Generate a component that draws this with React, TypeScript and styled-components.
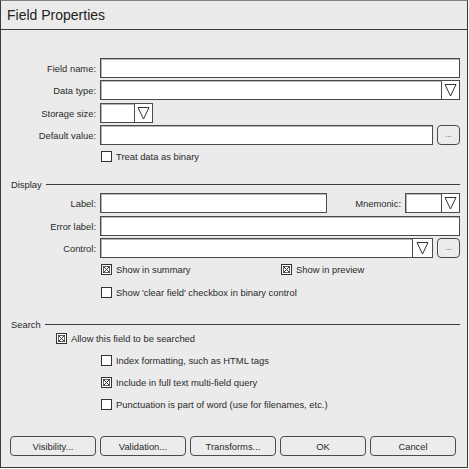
import React from "react";
import styled, { createGlobalStyle } from "styled-components";

const Global = createGlobalStyle`
  html, body { margin: 0; padding: 0; background: #ffffff; }
  body { font-family: "Liberation Sans", Arial, sans-serif; }
  * { box-sizing: border-box; }
`;

const Window = styled.div`
  width: 468px;
  height: 468px;
  border: 1px solid #3a3a3a;
  border-top-color: #808080;
  background: #ebebeb;
  display: flex;
  flex-direction: column;
  color: #2a2a2a;
  font-size: 9.4px;
`;

const TitleBar = styled.div`
  height: 29px;
  border-bottom: 1px solid #3a3a3a;
  padding-left: 6px;
  display: flex;
  align-items: center;
  font-size: 14px;
  color: #222;
`;

const Body = styled.div`
  padding: 28px 7px 0 9px;
  display: flex;
  flex-direction: column;
`;

const FieldRow = styled.div<{ $mt?: number }>`
  display: grid;
  grid-template-columns: 86px 1fr;
  column-gap: 4px;
  height: 20px;
  margin-top: ${(p) => p.$mt ?? 0}px;
  align-items: center;
`;

const Label = styled.span`
  text-align: right;
  white-space: nowrap;
`;

const Controls = styled.div`
  display: flex;
  align-items: center;
  height: 20px;
  gap: 4px;
  min-width: 0;
`;

const TextBox = styled.div<{ $w?: number }>`
  height: 20px;
  background: #ffffff;
  border: 1px solid #4a4a4a;
  box-shadow: inset 1px 1px 0 #b4b4b4;
  ${(p) => (p.$w ? `width: ${p.$w}px; flex: none;` : `flex: 1;`)}
`;

const SelectBox = styled.div<{ $w?: number }>`
  height: 20px;
  display: flex;
  background: #ffffff;
  border: 1px solid #4a4a4a;
  box-shadow: inset 1px 1px 0 #b4b4b4;
  ${(p) => (p.$w ? `width: ${p.$w}px; flex: none;` : `flex: 1;`)}
`;

const SelectValue = styled.div`
  flex: 1;
`;

const ArrowBox = styled.div<{ $w: number }>`
  width: ${(p) => p.$w}px;
  border-left: 1px solid #4a4a4a;
  display: flex;
  align-items: center;
  justify-content: center;
  background: #ffffff;
`;

const SmallButton = styled.div`
  width: 23px;
  height: 20px;
  flex: none;
  border: 1px solid #4a4a4a;
  border-radius: 4px;
  background: #ececec;
  display: flex;
  align-items: center;
  justify-content: center;
  font-size: 8px;
  color: #444;
  padding-bottom: 2px;
`;

const InlineLabel = styled.span<{ $w: number }>`
  width: ${(p) => p.$w}px;
  text-align: right;
  flex: none;
`;

const CheckRow = styled.div<{ $indent: number; $h: number; $mt?: number }>`
  display: flex;
  align-items: center;
  padding-left: ${(p) => p.$indent}px;
  height: ${(p) => p.$h}px;
  margin-top: ${(p) => p.$mt ?? 0}px;
`;

const CheckPair = styled.div`
  display: grid;
  grid-template-columns: 180px auto;
  align-items: center;
`;

const CheckItem = styled.label`
  display: flex;
  align-items: center;
  gap: 4px;
  white-space: nowrap;
`;

const SectionHeader = styled.div<{ $mt: number }>`
  display: flex;
  align-items: center;
  height: 12px;
  padding-left: 1px;
  margin-top: ${(p) => p.$mt}px;
  gap: 4px;
`;

const Rule = styled.div`
  flex: 1;
  height: 1px;
  background: #3a3a3a;
`;

const ButtonBar = styled.div`
  margin-top: auto;
  padding: 0 0 11px 9px;
  display: flex;
  gap: 4px;
`;

const DialogButton = styled.div`
  width: 86px;
  height: 20px;
  border: 1px solid #4a4a4a;
  border-radius: 4px;
  background: #ececec;
  display: flex;
  align-items: center;
  justify-content: center;
`;

const Arrow = () => (
  <svg width="13" height="14" viewBox="0 0 13 14">
    <polygon points="1,1.5 12,1.5 6.5,13" fill="none" stroke="#333" strokeWidth="1" />
  </svg>
);

const Box = ({ checked }: { checked?: boolean }) => (
  <svg width="11" height="11" viewBox="0 0 11 11">
    <rect x="0.5" y="0.5" width="10" height="10" fill="#fff" stroke="#333" />
    {checked && (
      <g stroke="#333" strokeWidth="1">
        <rect x="2.5" y="2.5" width="6" height="6" fill="none" stroke="#666" />
        <line x1="2" y1="2" x2="9" y2="9" />
        <line x1="9" y1="2" x2="2" y2="9" />
      </g>
    )}
  </svg>
);

const Check = ({ checked, children }: { checked?: boolean; children: React.ReactNode }) => (
  <CheckItem>
    <Box checked={checked} />
    {children}
  </CheckItem>
);

const Select = ({ w, arrow }: { w?: number; arrow: number }) => (
  <SelectBox $w={w}>
    <SelectValue />
    <ArrowBox $w={arrow}>
      <Arrow />
    </ArrowBox>
  </SelectBox>
);

export default function App() {
  return (
    <>
      <Global />
      <Window>
        <TitleBar>Field Properties</TitleBar>
        <Body>
          <FieldRow>
            <Label>Field name:</Label>
            <Controls>
              <TextBox />
            </Controls>
          </FieldRow>
          <FieldRow $mt={2}>
            <Label>Data type:</Label>
            <Controls>
              <Select arrow={18} />
            </Controls>
          </FieldRow>
          <FieldRow $mt={3}>
            <Label>Storage size:</Label>
            <Controls>
              <Select w={53} arrow={18} />
            </Controls>
          </FieldRow>
          <FieldRow $mt={2}>
            <Label>Default value:</Label>
            <Controls>
              <TextBox />
              <SmallButton>...</SmallButton>
            </Controls>
          </FieldRow>
          <CheckRow $indent={91} $h={20} $mt={1}>
            <Check>Treat data as binary</Check>
          </CheckRow>

          <SectionHeader $mt={12}>
            Display
            <Rule />
          </SectionHeader>
          <FieldRow $mt={3}>
            <Label>Label:</Label>
            <Controls>
              <TextBox $w={227} />
              <InlineLabel $w={70}>Mnemonic:</InlineLabel>
              <Select w={55} arrow={18} />
            </Controls>
          </FieldRow>
          <FieldRow $mt={3}>
            <Label>Error label:</Label>
            <Controls>
              <TextBox />
            </Controls>
          </FieldRow>
          <FieldRow $mt={2}>
            <Label>Control:</Label>
            <Controls>
              <Select arrow={20} />
              <SmallButton>...</SmallButton>
            </Controls>
          </FieldRow>
          <CheckRow $indent={91} $h={22}>
            <CheckPair>
              <Check checked>Show in summary</Check>
              <Check checked>Show in preview</Check>
            </CheckPair>
          </CheckRow>
          <CheckRow $indent={91} $h={22} $mt={1}>
            <Check>Show 'clear field' checkbox in binary control</Check>
          </CheckRow>

          <SectionHeader $mt={15}>
            Search
            <Rule />
          </SectionHeader>
          <CheckRow $indent={46} $h={16}>
            <Check checked>Allow this field to be searched</Check>
          </CheckRow>
          <CheckRow $indent={91} $h={22} $mt={3}>
            <Check>Index formatting, such as HTML tags</Check>
          </CheckRow>
          <CheckRow $indent={91} $h={22}>
            <Check checked>Include in full text multi-field query</Check>
          </CheckRow>
          <CheckRow $indent={91} $h={22}>
            <Check>Punctuation is part of word (use for filenames, etc.)</Check>
          </CheckRow>
        </Body>
        <ButtonBar>
          <DialogButton>Visibility...</DialogButton>
          <DialogButton>Validation...</DialogButton>
          <DialogButton>Transforms...</DialogButton>
          <DialogButton>OK</DialogButton>
          <DialogButton>Cancel</DialogButton>
        </ButtonBar>
      </Window>
    </>
  );
}
